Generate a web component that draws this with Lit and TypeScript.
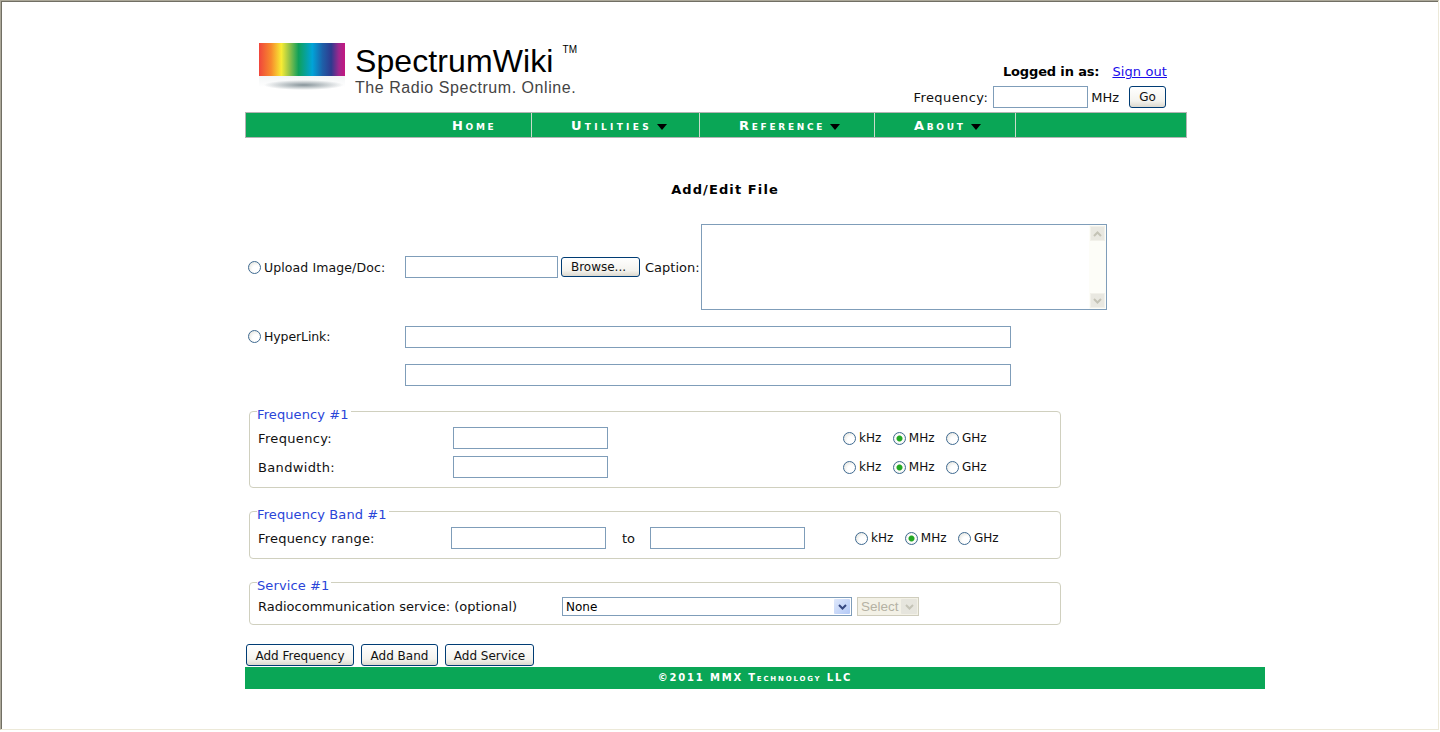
import { LitElement, html, css } from "lit";
import { customElement } from "lit/decorators.js";

const chevron = (up: boolean) => html`<svg width="9" height="6" viewBox="0 0 9 6">
  <path d=${up ? "M1 5 L4.5 1.5 L8 5" : "M1 1 L4.5 4.5 L8 1"} fill="none" stroke="currentColor" stroke-width="2" />
</svg>`;

@customElement("app-root")
export class AppRoot extends LitElement {
  static styles = css`
    :host {
      display: block;
      box-sizing: border-box;
      width: 1439px;
      height: 730px;
      border-top: 1px solid #aca899;
      border-left: 1px solid #aca899;
      border-right: 1px solid #ece9d8;
      border-bottom: 1px solid #ece9d8;
      box-shadow: inset 1px 1px 0 #716f64;
      background: #fff;
      font-family: "DejaVu Sans", Verdana, sans-serif;
      font-size: 13px;
      color: #111;
      overflow: hidden;
    }
    .page {
      width: 1020px;
      margin-left: 244px;
    }
    input[type="text"],
    textarea,
    select {
      box-sizing: border-box;
      border: 1px solid #7f9db9;
      border-radius: 0;
      background: #fff;
      margin: 0;
      padding: 0 3px;
      outline: none;
    }
    input[type="text"] {
      height: 22px;
    }
    input[type="radio"] {
      appearance: none;
      box-sizing: border-box;
      flex: none;
      width: 13px;
      height: 13px;
      margin: 0;
      border: 1px solid #3f6a91;
      border-radius: 50%;
      background: radial-gradient(circle at 65% 65%, #fff 35%, #dcdcd4 100%);
    }
    input[type="radio"]:checked {
      background: radial-gradient(circle, #23a823 0 2.5px, #fff 3.5px, #e4e4dc 100%);
    }
    button {
      box-sizing: border-box;
      height: 22px;
      margin: 0;
      padding: 0;
      border: 1px solid #003c74;
      border-radius: 3px;
      background: linear-gradient(#fff, #f4f3ee 70%, #dcd8ce);
      font-family: "DejaVu Sans", Tahoma, sans-serif;
      font-size: 12px;
      color: #111;
    }

    /* header */
    .header {
      display: flex;
      width: 942px;
      height: 111px;
      box-sizing: border-box;
      padding: 42px 20px 0 14px;
    }
    .mark {
      width: 86px;
      flex: none;
    }
    .spectrum {
      height: 33px;
      background: linear-gradient(
        90deg,
        #f0453c 0%,
        #f78a2c 14%,
        #f8ec34 26%,
        #8cc04a 36%,
        #0fa05a 46%,
        #00a4d8 62%,
        #1e5fa8 74%,
        #2e3a8e 84%,
        #a0278e 93%,
        #c4177f 100%
      );
    }
    .shadow {
      height: 16px;
      background: radial-gradient(ellipse 40px 5px at 52% 9px, #87949a, rgba(255, 255, 255, 0)),
        linear-gradient(#f3f5f6, #fff 70%);
    }
    .brand {
      margin-left: 10px;
      font-family: "Liberation Sans", Arial, sans-serif;
    }
    .brand-name {
      display: flex;
      height: 36px;
      font-size: 32px;
      line-height: 36px;
      letter-spacing: 0.1px;
      color: #000;
    }
    .brand-name sup {
      margin-left: 9px;
      font-size: 10px;
      line-height: 14px;
    }
    .brand-tag {
      font-size: 16px;
      line-height: 18px;
      letter-spacing: 0.55px;
      color: #444;
    }
    .account {
      margin-left: auto;
      margin-top: 20px;
      display: flex;
      flex-direction: column;
      align-items: flex-end;
    }
    .login {
      display: flex;
      gap: 13px;
      line-height: 18px;
    }
    .login b {
      color: #000;
      letter-spacing: -0.15px;
    }
    .login a {
      color: #1a0dea;
      letter-spacing: 0.1px;
    }
    .quick {
      display: flex;
      align-items: center;
      margin: 5px 1px 0 0;
      letter-spacing: 0.4px;
    }
    .quick input {
      width: 95px;
      margin-left: 5px;
    }
    .quick span {
      margin-left: 3px;
      letter-spacing: 0;
    }
    .quick button {
      width: 37px;
      margin-left: 10px;
      letter-spacing: 0;
    }

    /* nav */
    .nav {
      display: flex;
      box-sizing: border-box;
      width: 942px;
      height: 26px;
      border: 1px solid #b4b4b4;
      background: #0aa656;
    }
    .nav-item {
      display: flex;
      align-items: center;
      box-sizing: border-box;
      padding-left: 39px;
      border-right: 1px solid #c8dccb;
      font-size: 13px;
      font-weight: bold;
      font-variant: small-caps;
      letter-spacing: 2.7px;
      color: #fff;
    }
    .nav-item i {
      width: 0;
      height: 0;
      margin: 3px 0 0 5px;
      border: 5.5px solid transparent;
      border-top: 6px solid #000;
      border-bottom: 0;
    }
    .home {
      width: 286px;
      padding-left: 206px;
    }
    .utilities {
      width: 168px;
      letter-spacing: 3.3px;
    }
    .reference {
      width: 175px;
    }
    .about {
      width: 141px;
    }

    /* form */
    .title {
      width: 960px;
      margin: 44px 0 26px;
      text-align: center;
      font-weight: bold;
      line-height: 16px;
      letter-spacing: 1.1px;
      color: #000;
    }
    .row {
      display: flex;
      align-items: center;
    }
    .choice {
      display: flex;
      align-items: center;
      gap: 3px;
      width: 160px;
      padding-left: 3px;
      box-sizing: border-box;
      font-size: 12.5px;
      letter-spacing: 0.1px;
    }
    .upload {
      width: 153px;
    }
    .browse {
      width: 79px;
      height: 20px;
      margin: 0 5px 0 3px;
      padding-right: 4px;
    }
    .caption {
      position: relative;
      margin-left: 1px;
      height: 86px;
    }
    textarea {
      display: block;
      width: 406px;
      height: 86px;
      resize: none;
      overflow: hidden;
    }
    .scroll {
      position: absolute;
      top: 1px;
      right: 1px;
      bottom: 1px;
      width: 17px;
      display: flex;
      flex-direction: column;
      justify-content: space-between;
      align-items: center;
      box-sizing: border-box;
      padding: 1px 0;
      background: #fdfdf8;
    }
    .scroll span {
      display: flex;
      align-items: center;
      justify-content: center;
      width: 15px;
      height: 15px;
      border: 1px solid #f2f1ea;
      box-sizing: border-box;
      background: #e9e8e1;
      color: #c4c3b6;
    }
    .link {
      margin-top: 16px;
    }
    .link .choice {
      margin-bottom: 2px;
      letter-spacing: -0.1px;
    }
    .link-wide {
      width: 606px;
    }
    .spaced {
      margin-top: 16px;
      padding-left: 160px;
    }
    fieldset {
      position: relative;
      box-sizing: border-box;
      width: 812px;
      margin: 23px 0 0 4px;
      padding: 15px 8px 9px;
      border: 1px solid #d0d0bf;
      border-radius: 4px;
      min-width: 0;
    }
    .first {
      margin-top: 25px;
    }
    legend {
      position: absolute;
      top: -4px;
      left: 7px;
      padding: 0 2px 0 0;
      background: #fff;
      line-height: 14px;
      letter-spacing: 0.1px;
      color: #2a45d8;
    }
    .field + .field {
      margin-top: 7px;
    }
    .name {
      width: 195px;
      flex: none;
      letter-spacing: 0.35px;
    }
    .band-name {
      width: 193px;
      flex: none;
      letter-spacing: 0.2px;
    }
    .num {
      width: 155px;
      flex: none;
    }
    .units {
      display: flex;
      align-items: center;
      gap: 11.5px;
      margin-left: 235px;
      font-size: 12px;
    }
    .band-units {
      margin-left: 50px;
    }
    .unit {
      display: flex;
      align-items: center;
      gap: 3px;
    }
    .to {
      width: 44px;
      padding-left: 16px;
      box-sizing: border-box;
    }
    .service {
      padding: 14px 8px 8px;
    }
    .service-name {
      width: 304px;
      flex: none;
    }
    .picker {
      position: relative;
      height: 19px;
    }
    select {
      display: block;
      appearance: none;
      height: 19px;
      font-family: "DejaVu Sans", Tahoma, sans-serif;
      font-size: 12px;
      color: #000;
    }
    .service-select {
      width: 290px;
    }
    .unit-select {
      width: 62px;
      border-color: #cfcdbd;
      background: #f3f1e6;
      font-family: "Liberation Sans", Arial, sans-serif;
      font-size: 13.5px;
      color: #b5b2a4;
      opacity: 1;
    }
    .unit-picker {
      margin-left: 5px;
    }
    .drop {
      position: absolute;
      top: 2px;
      right: 2px;
      bottom: 2px;
      width: 16px;
      display: flex;
      align-items: center;
      justify-content: center;
      border-radius: 1px;
      background: linear-gradient(135deg, #dfe8fb, #b3c9f6);
      color: #35477f;
      pointer-events: none;
    }
    .drop-off {
      background: #e6e5dd;
      color: #c4c3b6;
    }
    .actions {
      display: flex;
      gap: 7px;
      margin: 19px 0 1px 1px;
    }
    .actions button {
      padding-top: 1px;
    }
    .add-frequency {
      width: 108px;
    }
    .add-band {
      width: 77px;
    }
    .add-service {
      width: 89px;
    }
    .footer {
      height: 22px;
      background: #0aa656;
      text-align: center;
      font-size: 10px;
      font-weight: bold;
      font-variant: small-caps;
      letter-spacing: 1.8px;
      line-height: 22px;
      color: #fff;
    }
  `;

  private radio(name: string, label: string, checked = false) {
    return html`<label class="unit"><input type="radio" name=${name} ?checked=${checked} />${label}</label>`;
  }

  private units(name: string, cls = "units") {
    return html`<div class=${cls}>
      ${this.radio(name, "kHz")} ${this.radio(name, "MHz", true)} ${this.radio(name, "GHz")}
    </div>`;
  }

  render() {
    return html`
      <div class="page">
        <header class="header">
          <div class="mark">
            <div class="spectrum"></div>
            <div class="shadow"></div>
          </div>
          <div class="brand">
            <div class="brand-name">SpectrumWiki<sup>TM</sup></div>
            <div class="brand-tag">The Radio Spectrum. Online.</div>
          </div>
          <div class="account">
            <div class="login"><b>Logged in as:</b><a href="#">Sign out</a></div>
            <div class="quick">
              Frequency:<input type="text" /><span>MHz</span><button>Go</button>
            </div>
          </div>
        </header>
        <nav class="nav">
          <div class="nav-item home">Home</div>
          <div class="nav-item utilities">Utilities <i></i></div>
          <div class="nav-item reference">Reference <i></i></div>
          <div class="nav-item about">About <i></i></div>
        </nav>

        <div class="title">Add/Edit File</div>

        <div class="row">
          <label class="choice"><input type="radio" name="source" />Upload Image/Doc:</label>
          <input class="upload" type="text" />
          <button class="browse">Browse...</button>
          Caption:
          <div class="caption">
            <textarea></textarea>
            <div class="scroll"><span>${chevron(true)}</span><span>${chevron(false)}</span></div>
          </div>
        </div>
        <div class="row link">
          <label class="choice"><input type="radio" name="source" />HyperLink:</label>
          <input class="link-wide" type="text" />
        </div>
        <div class="row spaced">
          <input class="link-wide" type="text" />
        </div>

        <fieldset class="first">
          <legend>Frequency #1</legend>
          <div class="row field">
            <span class="name">Frequency:</span>
            <input class="num" type="text" />
            ${this.units("freq")}
          </div>
          <div class="row field">
            <span class="name">Bandwidth:</span>
            <input class="num" type="text" />
            ${this.units("bw")}
          </div>
        </fieldset>

        <fieldset>
          <legend>Frequency Band #1</legend>
          <div class="row field">
            <span class="band-name">Frequency range:</span>
            <input class="num" type="text" />
            <span class="to">to</span>
            <input class="num" type="text" />
            ${this.units("band", "units band-units")}
          </div>
        </fieldset>

        <fieldset class="service">
          <legend>Service #1</legend>
          <div class="row field">
            <span class="service-name">Radiocommunication service: (optional)</span>
            <div class="picker">
              <select class="service-select"><option>None</option></select>
              <span class="drop">${chevron(false)}</span>
            </div>
            <div class="picker unit-picker">
              <select class="unit-select" disabled><option>Select</option></select>
              <span class="drop drop-off">${chevron(false)}</span>
            </div>
          </div>
        </fieldset>

        <div class="actions">
          <button class="add-frequency">Add Frequency</button>
          <button class="add-band">Add Band</button>
          <button class="add-service">Add Service</button>
        </div>
        <footer class="footer">©2011 MMX Technology LLC</footer>
      </div>
    `;
  }
}
